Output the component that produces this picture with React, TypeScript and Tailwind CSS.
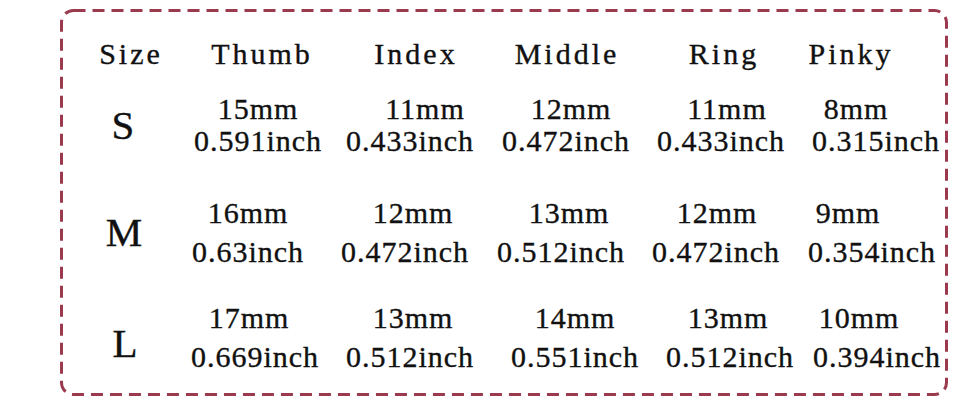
const cols = 'grid grid-cols-[124px_124px_190px_122px_186px_94px]';

const headers = [
  { t: 'Size', c: '' },
  { t: 'Thumb', c: 'translate-x-[7px]' },
  { t: 'Index', c: 'translate-x-[4px]' },
  { t: 'Middle', c: '-translate-x-[1px]' },
  { t: 'Ring', c: 'translate-x-[2px]' },
  { t: 'Pinky', c: '-translate-x-[11px]' },
];

type Line = { t: string; c: string };
type Row = { size: string; sc: string; rowCls: string; gap: string; cells: [Line, Line][] };

const rows: Row[] = [
  {
    size: 'S',
    sc: '-translate-x-[8px]',
    rowCls: 'mt-[19px]',
    gap: 'gap-0',
    cells: [
      [{ t: '15mm', c: 'translate-x-[3px]' }, { t: '0.591inch', c: 'translate-x-[3px]' }],
      [{ t: '11mm', c: 'translate-x-[13px]' }, { t: '0.433inch', c: '-translate-x-[2px]' }],
      [{ t: '12mm', c: 'translate-x-[3px]' }, { t: '0.472inch', c: '-translate-x-[2px]' }],
      [{ t: '11mm', c: 'translate-x-[5px]' }, { t: '0.433inch', c: '-translate-x-[1px]' }],
      [{ t: '8mm', c: '-translate-x-[6px]' }, { t: '0.315inch', c: 'translate-x-[14px]' }],
    ],
  },
  {
    size: 'M',
    sc: '-translate-x-[7px]',
    rowCls: 'mt-[40px]',
    gap: 'gap-[7px]',
    cells: [
      [{ t: '16mm', c: '-translate-x-[7px]' }, { t: '0.63inch', c: '-translate-x-[7px]' }],
      [{ t: '12mm', c: 'translate-x-[1px]' }, { t: '0.472inch', c: '-translate-x-[7px]' }],
      [{ t: '13mm', c: 'translate-x-[1px]' }, { t: '0.512inch', c: '-translate-x-[7px]' }],
      [{ t: '12mm', c: '-translate-x-[5px]' }, { t: '0.472inch', c: '-translate-x-[6px]' }],
      [{ t: '9mm', c: '-translate-x-[14px]' }, { t: '0.354inch', c: 'translate-x-[10px]' }],
    ],
  },
  {
    size: 'L',
    sc: '-translate-x-[6px] translate-y-[6px]',
    rowCls: 'mt-[34px]',
    gap: 'gap-[7px]',
    cells: [
      [{ t: '17mm', c: '-translate-x-[6px]' }, { t: '0.669inch', c: '' }],
      [{ t: '13mm', c: 'translate-x-[1px]' }, { t: '0.512inch', c: '-translate-x-[2px]' }],
      [{ t: '14mm', c: 'translate-x-[7px]' }, { t: '0.551inch', c: 'translate-x-[7px]' }],
      [{ t: '13mm', c: 'translate-x-[6px]' }, { t: '0.512inch', c: 'translate-x-[8px]' }],
      [{ t: '10mm', c: '-translate-x-[3px]' }, { t: '0.394inch', c: 'translate-x-[15px]' }],
    ],
  },
];

export default function App() {
  return (
    <div className="w-[979px] h-[408px] bg-white pl-[60px] pt-[9px] text-[#111] font-['Liberation_Serif',serif] [-webkit-text-stroke:0.35px_#111]">
      <div className="relative w-[888px] h-[387px] pl-[9px] pt-[25px]">
        {/* dashed frame */}
        <svg className="absolute inset-0 pointer-events-none" width="888" height="387">
          <rect
            x="1.5"
            y="1.5"
            width="885"
            height="384"
            rx="12"
            fill="none"
            stroke="#9b3a4e"
            strokeWidth="3"
            strokeDasharray="12 7"
          />
        </svg>

        <div className={`${cols} text-[30px] leading-[40px] tracking-[3px]`}>
          {headers.map((h, i) => (
            <div key={i} className="flex justify-center whitespace-nowrap">
              <span className={h.c}>{h.t}</span>
            </div>
          ))}
        </div>

        {rows.map((r) => (
          <div key={r.size} className={`${cols} ${r.rowCls}`}>
            <div className="flex items-center justify-center">
              <span className={`text-[41px] leading-none ${r.sc}`}>{r.size}</span>
            </div>
            {r.cells.map((cell, i) => (
              <div key={i} className={`flex flex-col items-center whitespace-nowrap text-[30px] leading-[32px] tracking-[1px] ${r.gap}`}>
                <span className={cell[0].c}>{cell[0].t}</span>
                <span className={cell[1].c}>{cell[1].t}</span>
              </div>
            ))}
          </div>
        ))}
      </div>
    </div>
  );
}
